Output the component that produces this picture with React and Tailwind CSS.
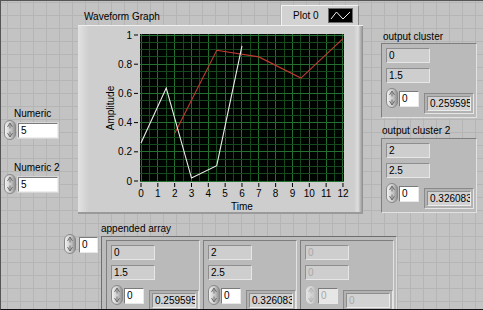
import React from "react";

function Spinner({ dim }) {
  const id = dim ? "spd" : "sp";
  const st = dim ? "#b4b4b4" : "#6e6e6e";
  return (
    <svg width="12" height="20" viewBox="0 0 12 20" className="block shrink-0">
      <defs>
        <linearGradient id={id} x1="0" y1="0" x2="1" y2="0">
          <stop offset="0" stopColor={dim ? "#e6e6e6" : "#f4f4f4"} />
          <stop offset="0.55" stopColor={dim ? "#d2d2d2" : "#cacaca"} />
          <stop offset="1" stopColor={dim ? "#b8b8b8" : "#8c8c8c"} />
        </linearGradient>
      </defs>
      <rect x="0.5" y="0.5" width="11" height="19" rx="5.5" fill={`url(#${id})`} stroke={dim ? "#b6b6b6" : "#888888"} />
      <path d="M3.5 7 L6 3 L8.5 7" fill="none" stroke={st} strokeWidth="1" />
      <path d="M6 3.5 L6 8.5" stroke={st} strokeWidth="1" />
      <path d="M3.5 13 L6 17 L8.5 13" fill="none" stroke={st} strokeWidth="1" />
      <path d="M6 11.5 L6 16.5" stroke={st} strokeWidth="1" />
    </svg>
  );
}

function Ind({ v, dim }) {
  return (
    <div
      className={`w-[44px] h-[15px] bg-[#cecece] border border-t-[#8e8e8e] border-l-[#8e8e8e] border-r-[#e6e6e6] border-b-[#e6e6e6] pl-[2px] text-[10px] leading-[13px] ${
        dim ? "text-[#a8a8a8]" : "text-black"
      }`}
    >
      {v}
    </div>
  );
}

function Cluster({ a, b, idx, val, dim, w }) {
  return (
    <div
      className={`${w} h-[75px] shrink-0 bg-[#bababa] border border-t-[#7e7e7e] border-l-[#7e7e7e] border-r-[#e2e2e2] border-b-[#e2e2e2] pl-[4px] pt-[4px] flex flex-col gap-[5px]`}
    >
      <Ind v={a} dim={dim} />
      <Ind v={b} dim={dim} />
      <div className="flex items-start">
        <Spinner dim={dim} />
        <div
          className={`ml-[1px] mt-[3px] w-[20px] h-[16px] border border-t-[#7a7a7a] border-l-[#7a7a7a] border-r-[#e8e8e8] border-b-[#e8e8e8] pl-[2px] text-[10px] leading-[14px] ${
            dim ? "bg-[#e6e6e6] text-[#a8a8a8]" : "bg-white text-black"
          }`}
        >
          {idx}
        </div>
        <div className="ml-[5px] mt-[5px] w-[50px] h-[21px] bg-[#b2b2b2] border border-t-[#8a8a8a] border-l-[#8a8a8a] border-r-[#e6e6e6] border-b-[#e6e6e6] p-[2px]">
          <div
            className={`h-full overflow-hidden whitespace-nowrap bg-[#d2d2d2] border border-t-[#8e8e8e] border-l-[#8e8e8e] border-r-[#ececec] border-b-[#ececec] pl-[2px] text-[10px] leading-[13px] ${
              dim ? "text-[#a8a8a8]" : "text-black"
            }`}
          >
            {val}
          </div>
        </div>
      </div>
    </div>
  );
}

function NumericCtl({ label, value }) {
  return (
    <div className="flex flex-col">
      <div className="pl-[10px] h-[12px] text-[10px] leading-[12px] text-black">{label}</div>
      <div className="flex items-start">
        <Spinner />
        <div className="ml-[1px] mt-[2px] w-[42px] h-[17px] bg-[#d6d6d6] p-px">
          <div className="h-full bg-white border border-t-[#7a7a7a] border-l-[#7a7a7a] border-r-[#eeeeee] border-b-[#eeeeee] pl-[2px] text-[10px] leading-[13px] text-black">
            {value}
          </div>
        </div>
      </div>
    </div>
  );
}

const X0 = 140;
const DX = 16.83;
const Y0 = 179;
const DY = 146;
const px = (t) => X0 + DX * t;
const py = (v) => Y0 - DY * v;

function Graph() {
  const vLines = [];
  for (let k = 0; k <= 24; k++) vLines.push({ x: X0 + (DX / 2) * k, major: k % 2 === 0 });
  const hLines = [];
  for (let k = 0; k <= 20; k++) hLines.push({ y: Y0 - (DY / 20) * k, major: k % 4 === 0 });
  const white = [
    [0, 0.2596],
    [1.5, 0.637],
    [3, 0.02],
    [4.5, 0.105],
    [6, 0.925],
  ];
  const red = [
    [2, 0.326],
    [4.5, 0.895],
    [7, 0.85],
    [9.5, 0.705],
    [12, 0.975],
  ];
  const pts = (a) => a.map(([t, v]) => `${px(t)},${py(v)}`).join(" ");
  const yl = ["0", "0.2", "0.4", "0.6", "0.8", "1"];
  return (
    <svg
      width="285"
      height="189"
      viewBox="77 24 285 189"
      className="absolute left-0 top-0 block"
      fontFamily="'Liberation Sans', Arial, sans-serif"
      fontSize="10"
    >
      <defs>
        <clipPath id="plotclip">
          <rect x="139" y="32" width="204" height="148" />
        </clipPath>
      </defs>
      <rect x="139" y="32" width="204" height="148" fill="#000400" />
      <g clipPath="url(#plotclip)" shapeRendering="crispEdges">
        {vLines.map((l, i) => (
          <line key={"v" + i} x1={l.x} y1="32" x2={l.x} y2="180" stroke={l.major ? "#237030" : "#164a1e"} strokeWidth="1" />
        ))}
        {hLines.map((l, i) => (
          <line key={"h" + i} x1="139" y1={l.y} x2="343" y2={l.y} stroke={l.major ? "#237030" : "#164a1e"} strokeWidth="1" />
        ))}
      </g>
      <g clipPath="url(#plotclip)">
        <polyline points={pts(red)} fill="none" stroke="#c23a34" strokeWidth="1.1" />
        <polyline points={pts(white)} fill="none" stroke="#ececec" strokeWidth="1.1" />
      </g>
      {yl.map((s, i) => (
        <g key={"y" + i}>
          <text x="131" y={py(i * 0.2) + 3.5} textAnchor="end" fill="#000">
            {s}
          </text>
          <line x1="133" y1={py(i * 0.2)} x2="137" y2={py(i * 0.2)} stroke="#000" />
        </g>
      ))}
      {Array.from({ length: 13 }, (_, t) => (
        <g key={"x" + t}>
          <line x1={px(t)} y1="181" x2={px(t)} y2="185" stroke="#000" />
          <text x={px(t)} y="194.5" textAnchor="middle" fill="#000">
            {t}
          </text>
        </g>
      ))}
      <text x="241" y="208" textAnchor="middle" fill="#000">
        Time
      </text>
      <text x="113" y="106" textAnchor="middle" fill="#000" transform="rotate(-90 113 106)">
        Amplitude
      </text>
    </svg>
  );
}

export default function App() {
  return (
    <div className="relative w-[483px] h-[310px] overflow-hidden bg-[#c3c3c3] bg-[linear-gradient(to_right,#b5b5b5_1px,transparent_1px),linear-gradient(to_bottom,#b5b5b5_1px,transparent_1px)] bg-[size:13px_13px] bg-[position:6px_1px] border-l border-t border-b border-l-[#555555] border-t-[#555555] border-b-[#111111] font-['Liberation_Sans',Arial,sans-serif] text-black">
      {/* Waveform graph */}
      <div className="absolute left-[83px] top-[10px] text-[10px] leading-[12px]">Waveform Graph</div>
      <div className="absolute left-[280px] top-[4px] w-[78px] h-[21px] flex items-center bg-[#d2d2d2] border border-t-[#f2f2f2] border-l-[#f2f2f2] border-r-[#8a8a8a] border-b-[#b8b8b8]">
        <span className="pl-[11px] text-[10px] leading-[12px]">Plot 0</span>
        <div className="ml-auto mr-[5px] w-[25px] h-[15px] bg-black border border-[#6a6a6a]">
          <svg width="23" height="13" viewBox="0 0 23 13" className="block">
            <polyline points="2,10 7.5,3 14,10 21,3" fill="none" stroke="#f0f0f0" strokeWidth="1" />
          </svg>
        </div>
      </div>
      <div className="absolute left-[77px] top-[24px] w-[285px] h-[189px] bg-[linear-gradient(to_right,#e2e2e2,#cecece_11px,#cecece_calc(100%_-_9px),#dedede_calc(100%_-_5px),#8a8a8a)] border-t border-t-[#efefef] border-b-2 border-b-[#9a9a9a]">
        <Graph />
      </div>

      {/* Left numerics */}
      <div className="absolute left-[3px] top-[107px]">
        <NumericCtl label="Numeric" value="5" />
      </div>
      <div className="absolute left-[3px] top-[161px]">
        <NumericCtl label="Numeric 2" value="5" />
      </div>

      {/* Output clusters */}
      <div className="absolute left-[380px] top-[30px] flex flex-col">
        <div className="pl-[2px] h-[12px] text-[10px] leading-[12px]">output cluster</div>
        <Cluster a="0" b="1.5" idx="0" val="0.259595" w="w-[96px]" />
      </div>
      <div className="absolute left-[380px] top-[124px] flex flex-col gap-[1px]">
        <div className="pl-[1px] h-[12px] text-[10px] leading-[12px]">output cluster 2</div>
        <Cluster a="2" b="2.5" idx="0" val="0.326083" w="w-[96px]" />
      </div>

      {/* Appended array */}
      <div className="absolute left-[100px] top-[222px] text-[10px] leading-[12px]">appended array</div>
      <div className="absolute left-[63px] top-[233px] flex items-start">
        <Spinner />
        <div className="ml-[3px] mt-[3px] w-[19px] h-[16px] bg-white border border-t-[#7a7a7a] border-l-[#7a7a7a] border-r-[#e8e8e8] border-b-[#e8e8e8] pl-[2px] text-[10px] leading-[14px]">
          0
        </div>
      </div>
      <div className="absolute left-[100px] top-[235px] w-[296px] h-[85px] bg-[#bcbcbc] border border-t-[#6e6e6e] border-l-[#6e6e6e] border-r-[#dcdcdc] border-b-[#dcdcdc] pl-[4px] pt-[3px] flex gap-[3px]">
        <Cluster a="0" b="1.5" idx="0" val="0.259595" w="w-[94px]" />
        <Cluster a="2" b="2.5" idx="0" val="0.326083" w="w-[94px]" />
        <Cluster a="0" b="0" idx="0" val="0" w="w-[94px]" dim />
      </div>
    </div>
  );
}
